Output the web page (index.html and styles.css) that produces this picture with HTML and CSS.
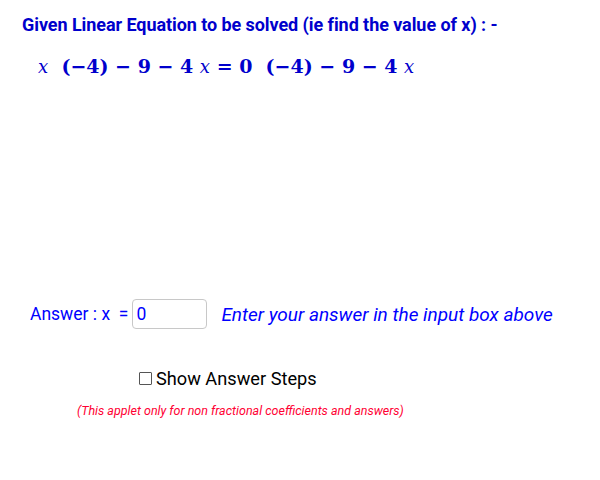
FILE: index.html
```html
<!DOCTYPE html>
<html>
<head>
<meta charset="utf-8">
<link rel="stylesheet" href="styles.css">
</head>
<body>
<div class="page">
  <h1 class="title">Given Linear Equation to be solved (ie find the value of x) : -</h1>
  <div class="equation"><i>x</i>&nbsp;&nbsp;(−4) − 9 − 4&nbsp;<i>x</i> = 0&nbsp;&nbsp;(−4) − 9 − 4&nbsp;<i>x</i></div>
  <div class="answer-row">
    <span class="answer-label">Answer : x&nbsp;&nbsp;=</span>
    <span class="answer-box">0</span>
    <span class="hint">Enter your answer in the input box above</span>
  </div>
  <div class="steps-row">
    <span class="checkbox"></span>
    <span class="steps-label">Show Answer Steps</span>
  </div>
  <div class="note">(This applet only for non fractional coefficients and answers)</div>
</div>
</body>
</html>
```
FILE: styles.css
```css
html, body {
  margin: 0;
  padding: 0;
  background: #ffffff;
}
.page {
  width: 600px;
  height: 480px;
  font-family: Roboto, "Liberation Sans", sans-serif;
  display: flex;
  flex-direction: column;
}
.title {
  margin: 14px 0 0 22px;
  font-size: 18px;
  font-weight: 700;
  color: #0000cc;
  letter-spacing: -0.07px;
  line-height: 22px;
}
.equation {
  margin: 18px 0 0 38px;
  font-family: "DejaVu Serif", serif;
  font-weight: 700;
  font-size: 19px;
  color: #0000cc;
  line-height: 24px;
  height: 24px;
  white-space: nowrap;
}
.equation i {
  font-family: "DejaVu Serif", serif;
  font-weight: 400;
  font-style: italic;
  font-size: 18px;
}
.answer-row {
  margin: 221px 0 0 30px;
  display: flex;
  align-items: center;
  height: 30px;
}
.answer-label {
  font-size: 17.5px;
  color: #0000ff;
}
.answer-box {
  box-sizing: border-box;
  width: 75px;
  height: 30px;
  border: 1px solid #c8c8c8;
  border-radius: 4px;
  margin-left: 4px;
  padding: 0 0 0 3px;
  font-size: 17.5px;
  color: #0000ff;
  line-height: 28px;
}
.hint {
  margin-left: 14px;
  font-size: 19px;
  font-style: italic;
  color: #0000ff;
}
.steps-row {
  margin: 39px 0 0 139px;
  display: flex;
  align-items: center;
}
.checkbox {
  box-sizing: border-box;
  width: 13px;
  height: 13px;
  border: 1px solid #555;
  border-radius: 1px;
}
.steps-label {
  margin-left: 4px;
  font-size: 18.2px;
  color: #000;
}
.note {
  margin: 14px 0 0 77px;
  font-size: 12.5px;
  font-style: italic;
  color: #ff0033;
}
```
